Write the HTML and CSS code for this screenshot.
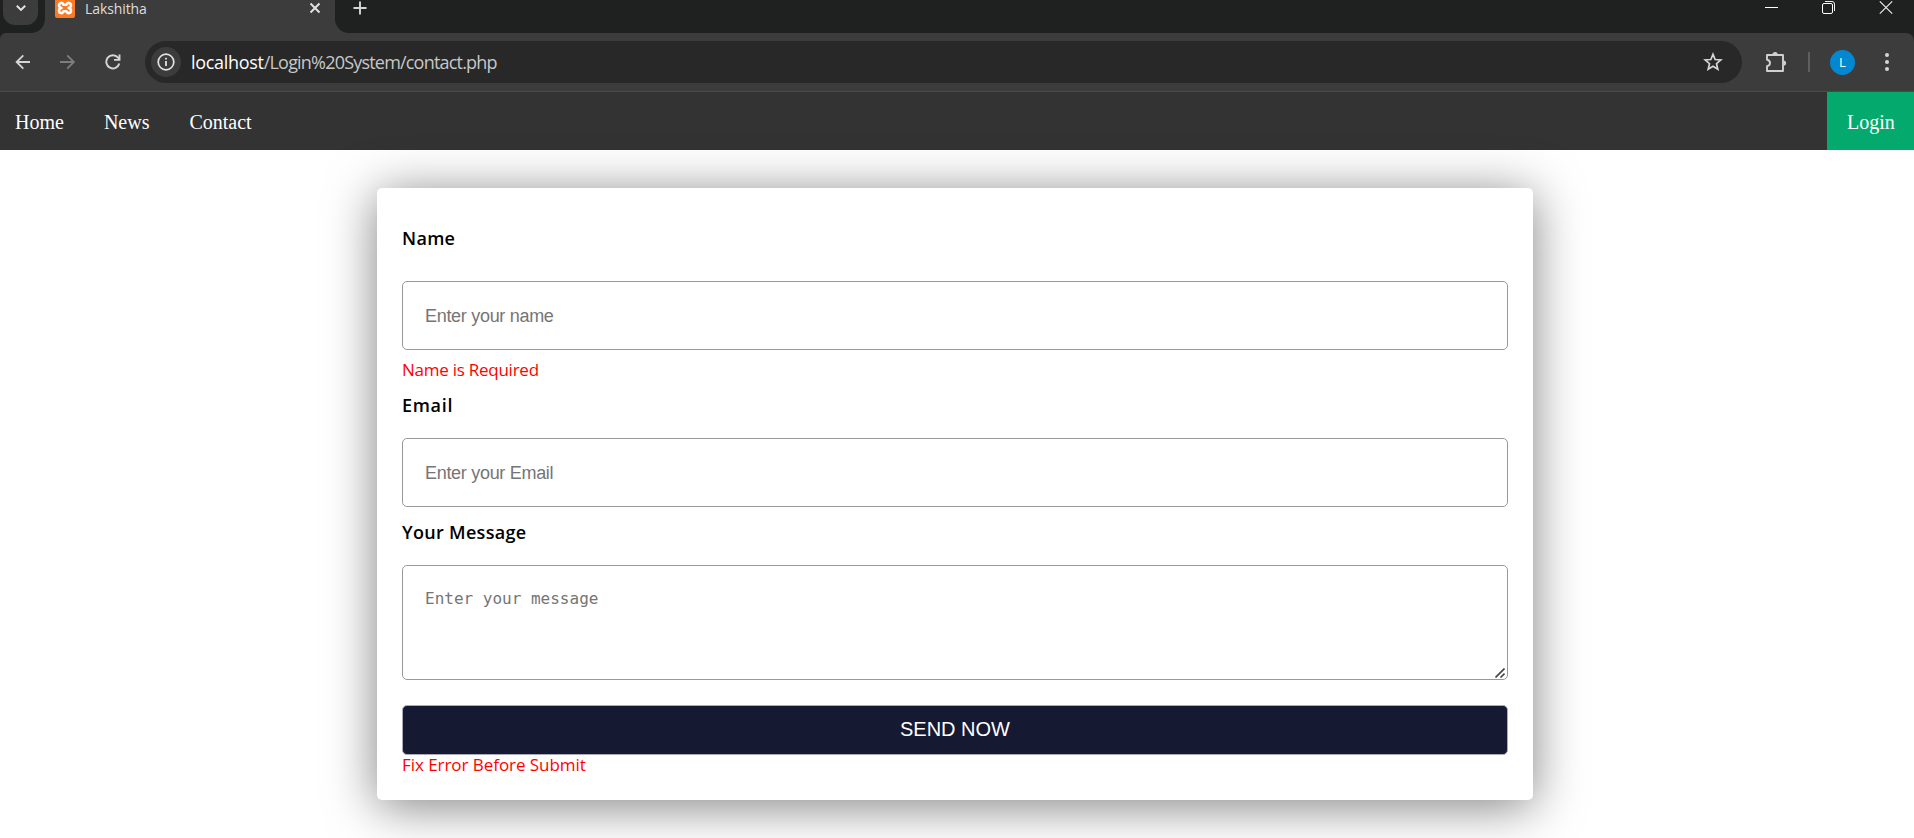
FILE: index.html
```
<!DOCTYPE html>
<html lang="en">
<head>
<meta charset="utf-8">
<title>Lakshitha</title>
<link rel="stylesheet" href="styles.css">
</head>
<body>
<header class="browser">
  <div class="tabstrip">
    <div class="strip-left">
      <div class="tab-search"><svg width="12" height="8" viewBox="0 0 12 8"><path d="M1.8 1.700 6 5.900l4.200-4.200" fill="none" stroke="#e3e3e3" stroke-width="2"/></svg></div>
    </div>
    <div class="tab">
      <svg class="favicon" width="20" height="20" viewBox="0 0 20 20"><rect y="-2" width="20" height="20" rx="2" fill="#fb7a24"/><path d="M6.500 8C4.500 7.500 4 6.500 4 5.500 4 2.300 7.700 2 8.600 4.800h2.800C12.300 2 16 2.300 16 5.500c0 1-.5 2-2.500 2.500 2 .5 2.500 1.500 2.500 2.500 0 3.200-3.700 3.500-4.600.7H8.600C7.700 14 4 13.700 4 10.500c0-1 .5-2 2.500-2.500z" fill="none" stroke="#fff" stroke-width="2.500" stroke-linejoin="round"/></svg>
      <span class="tab-title">Lakshitha</span>
      <svg class="tab-close" width="12" height="12" viewBox="0 0 12 12"><path d="m1.500 1.500 9 9m0-9-9 9" stroke="#e3e3e3" stroke-width="1.900"/></svg>
    </div>
    <div class="strip-right">
      <svg class="new-tab" width="14" height="14" viewBox="0 0 14 14"><path d="M7 .5v13M.5 7h13" stroke="#d5d5d5" stroke-width="1.900"/></svg>
      <div class="window-buttons">
        <svg width="13" height="16" viewBox="0 0 13 16"><path d="M0 7.500h13" stroke="#fff"/></svg>
        <svg width="13" height="16" viewBox="0 0 13 16"><path d="M3 1.500h7a2.500 2.500 0 0 1 2.500 2.500v7" fill="none" stroke="#eee"/><rect x=".5" y="3.500" width="10" height="10" rx="1.500" fill="none" stroke="#fff"/></svg>
        <svg width="14" height="16" viewBox="0 0 14 16"><path d="m.8 1.300 12.400 12.400m0-12.400L.8 13.700" stroke="#f2f2f2" stroke-width="1.100"/></svg>
      </div>
    </div>
  </div>
  <div class="toolbar">
    <div class="history">
      <svg width="16" height="16" viewBox="0 0 16 16"><path d="M15 8H1.500M8.300 1.300 1.600 8l6.700 6.700" fill="none" stroke="#d5d5d5" stroke-width="1.800"/></svg>
      <svg width="16" height="16" viewBox="0 0 16 16"><path d="M0 8h13.500M7.200 1.300 13.900 8l-6.700 6.700" fill="none" stroke="#7d7d7d" stroke-width="1.800"/></svg>
      <svg width="16" height="16" viewBox="0 0 16 16"><path d="M14.300 9.500A6.600 6.600 0 1 1 13 3.600l1.700 1.900M14.500 .6v5.300H9" fill="none" stroke="#d5d5d5" stroke-width="1.900"/></svg>
    </div>
    <div class="address">
      <div class="site-info"><svg width="18" height="18" viewBox="0 0 18 18"><circle cx="9" cy="9" r="7.800" fill="none" stroke="#e3e3e3" stroke-width="1.700"/><path d="M9 8v5M9 4.700v1.900" stroke="#e3e3e3" stroke-width="1.800"/></svg></div>
      <span class="url"><span class="host">localhost</span>/Login%20System/contact.php</span>
      <svg class="star" width="20" height="20" viewBox="0 0 20 20"><path d="m10 2.300 2.150 5.250 5.650.45-4.300 3.700 1.300 5.550-4.800-3-4.800 3 1.300-5.550L2.200 8l5.650-.45z" fill="none" stroke="#d5d5d5" stroke-width="1.700"/></svg>
    </div>
    <svg class="extensions" width="22" height="22" viewBox="0 0 22 22"><path d="M2 4h16v16H2v-4.800c4-.8 4-5.600 0-6.400z" fill="none" stroke="#d0d0d0" stroke-width="1.900" stroke-linejoin="round"/><path d="M7.500 3.500a2.600 2.600 0 0 1 5.200 0zM18.500 9.400a2.600 2.600 0 0 1 0 5.200z" fill="#d0d0d0"/></svg>
    <span class="divider"></span>
    <span class="avatar">L</span>
    <svg class="menu" width="4" height="18" viewBox="0 0 4 18"><g fill="#d5d5d5"><circle cx="2" cy="2" r="2"/><circle cx="2" cy="9" r="2"/><circle cx="2" cy="16" r="2"/></g></svg>
  </div>
</header>
<nav class="nav">
  <a>Home</a><a>News</a><a>Contact</a><a class="login">Login</a>
</nav>
<main class="page">
  <form class="card">
    <label class="label label-name" for="name">Name</label>
    <input class="field" id="name" type="text" placeholder="Enter your name">
    <p class="error name-error">Name is Required</p>
    <label class="label label-email" for="email">Email</label>
    <input class="field" id="email" type="text" placeholder="Enter your Email">
    <label class="label label-message" for="message">Your Message</label>
    <div class="message-wrap">
      <textarea class="field message" id="message" placeholder="Enter your message"></textarea>
      <svg class="grip" width="10" height="10" viewBox="0 0 10 10"><path d="M.5 9.500l9-9M5.500 9.500l4-4" stroke="#444" stroke-width="1.600"/></svg>
    </div>
    <button class="send" type="button">SEND NOW</button>
    <p class="error submit-error">Fix Error Before Submit</p>
  </form>
</main>
</body>
</html>
```
FILE: styles.css
```
* { box-sizing: border-box; }
body { margin: 0; height: 838px; overflow: hidden; background: #fff; font-family: "Liberation Serif", serif; }
svg { display: block; flex: none; }

.browser { background: #1f2120; font-family: "Segoe UI", "Open Sans", sans-serif; }
.tabstrip { display: flex; height: 33px; background: linear-gradient(90deg, #3c3c3c 50%, #1f2120 50%); }
.strip-left { width: 45px; background: #1f2120; border-radius: 0 0 14px 0; padding-left: 3px; }
.tab-search { width: 35px; height: 25px; border-radius: 0 0 12px 12px; background: #3c3c3c; display: flex; justify-content: center; padding-top: 4px; }
.tab { width: 290px; background: #3c3c3c; display: flex; align-items: flex-start; padding: 0 14px 0 10px; }
.tab-title { margin-left: 10px; font-size: 14px; line-height: 18px; letter-spacing: -0.1px; color: #dedede; }
.tab-close { margin: 2px 0 0 auto; }
.strip-right { flex: 1; display: flex; justify-content: space-between; background: #1f2120; border-radius: 0 0 0 14px; padding: 0 21px 0 18px; }
.new-tab { margin-top: 1px; }
.window-buttons { display: flex; gap: 44px; }

.toolbar { height: 59px; display: flex; align-items: center; background: #3c3c3c; border-radius: 6px 8px 0 0; border-bottom: 1px solid #4a4a4a; padding: 0 25px 0 15px; }
.history { display: flex; gap: 29px; width: 130px; }
.address { width: 1597px; height: 42px; margin-top: -1px; border-radius: 21px; background: #282828; display: flex; align-items: center; padding: 0 19px 0 6px; }
.site-info { width: 30px; height: 30px; border-radius: 50%; background: #3c3c3c; display: flex; align-items: center; justify-content: center; }
.url { margin-left: 10px; font-size: 18px; line-height: 24px; letter-spacing: -0.8px; color: #c7c7c7; }
.host { color: #fff; letter-spacing: -0.3px; }
.star { margin-left: auto; }
.extensions { margin-left: 23px; }
.divider { width: 2px; height: 20px; margin-left: 21px; background: #5e5e5e; }
.avatar { width: 25px; height: 25px; margin-left: 20px; border-radius: 50%; background: #0288d1; color: #fff; font-size: 13px; line-height: 25px; text-align: center; }
.menu { margin-left: auto; }

.nav { height: 58px; display: flex; gap: 40px; padding-left: 15px; background: #333; color: #fff; font-size: 20px; line-height: 60px; }
.login { margin-left: auto; width: 87px; padding-left: 20px; background: #04aa6d; }

.page { display: flex; padding: 38px 381px 38px 377px; }
.card { flex: 1; height: 612px; padding: 37px 25px 0; border-radius: 5px; background: #fff; box-shadow: 0 6px 50px rgba(0, 0, 0, 0.5); display: flex; flex-direction: column; font-family: "Trebuchet MS", "Open Sans", sans-serif; }
.label { font-weight: 600; font-size: 18px; line-height: 26px; height: 26px; color: #000; letter-spacing: 0.3px; }
.label-name { margin-bottom: 30px; }
.label-email { margin-bottom: 20px; letter-spacing: 0.7px; }
.label-message { margin: 12px 0 20px; }
.field { display: block; width: 100%; height: 69px; flex: none; border: 1px solid #999; border-radius: 5px; background: #fff; padding: 2px 22px 0; font: 18px/22px "Liberation Sans", Arial, sans-serif; letter-spacing: -0.3px; outline: 0; }
.field::placeholder { color: #757575; opacity: 1; }
.message-wrap { position: relative; height: 115px; }
.message { height: 115px; padding-top: 22px; resize: none; overflow: hidden; font: 16px/22px "DejaVu Sans Mono", monospace; letter-spacing: 0; }
.grip { position: absolute; right: 3px; bottom: 2px; }
.error { margin: 0; color: #f00; font-size: 17px; line-height: 22px; height: 22px; letter-spacing: -0.05px; }
.name-error { margin: 9px 0 11px; letter-spacing: -0.25px; }
.submit-error { margin-top: -1px; }
.send { flex: none; height: 50px; margin-top: 25px; border: 1px solid #a9abb8; border-radius: 5px; background: #151932; color: #fff; font: 20px/24px "Liberation Sans", Arial, sans-serif; padding: 0 0 3px; }
```
